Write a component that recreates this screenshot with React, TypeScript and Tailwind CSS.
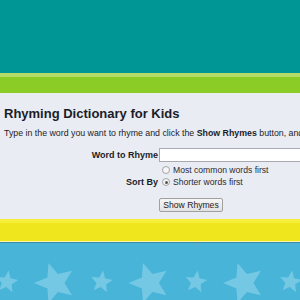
const starPoints = (cx: number, cy: number, R: number, rot: number) => {
  const pts: string[] = [];
  for (let i = 0; i < 10; i++) {
    const r = i % 2 === 0 ? R : R * 0.45;
    const a = ((rot - 90 + i * 36) * Math.PI) / 180;
    pts.push(`${(cx + r * Math.cos(a)).toFixed(1)},${(cy + r * Math.sin(a)).toFixed(1)}`);
  }
  return pts.join(" ");
};

const StarBand = () => {
  const periods = [-1, 0, 1, 2, 3];
  return (
    <svg width="300" height="57" viewBox="0 0 300 57" className="block shrink-0">
      <rect width="300" height="57" fill="#48b4d8" />
      {periods.map((p) => (
        <g key={p}>
          <rect x={7 + p * 94.5} y="0" width="1" height="2" fill="#7a9fb0" />
          <polygon points={starPoints(7 + p * 94.5, 39, 11.5, 8)} fill="#74c8e4" />
          <polygon points={starPoints(55 + p * 94.5, 40, 21, -18)} fill="#74c8e4" />
        </g>
      ))}
    </svg>
  );
};

const Radio = ({ checked }: { checked?: boolean }) => (
  <span className="w-[8px] h-[8px] rounded-full border border-[#a4a4a4] bg-[#f6f6f6] flex items-center justify-center shrink-0">
    {checked && <span className="w-[3px] h-[3px] rounded-full bg-[#555]" />}
  </span>
);

const App = () => {
  return (
    <div className="w-[300px] h-[300px] overflow-hidden flex flex-col bg-[#e9ecf3] font-['Liberation_Sans',Arial,sans-serif] text-[#1c1c28]">
      <div className="h-[73px] bg-[#009696] shrink-0" />
      <div className="h-[4px] bg-[#b2db68] shrink-0" />
      <div className="h-[16px] bg-[#8ccc26] shrink-0" />

      <main className="h-[126px] shrink-0 px-1 pt-[13px] whitespace-nowrap overflow-hidden">
        <h1 className="text-[13px] leading-4 font-bold">Rhyming Dictionary for Kids</h1>
        <p className="mt-[3px] text-[8.8px] leading-4">
          Type in the word you want to rhyme and click the <b>Show Rhymes</b> button, and a list of rhymes will appear.
        </p>

        <div className="mt-[7px] grid grid-cols-[154px_1fr] gap-x-[1px] items-center text-[8.6px] leading-[12px]">
          <label className="text-right font-bold text-[9px]">Word to Rhyme</label>
          <input className="h-[14px] w-[200px] bg-white border border-[#a9a9b3]" />

          <span />
          <label className="flex items-center gap-[3px] ml-[3px] mt-[2px] text-[#2a2a33]">
            <Radio />
            Most common words first
          </label>

          <span className="text-right font-bold text-[9px]">Sort By</span>
          <label className="flex items-center gap-[3px] ml-[3px] text-[#2a2a33]">
            <Radio checked />
            Shorter words first
          </label>

          <span />
          <button className="mt-[10px] w-[64px] h-[14px] text-[8.6px] leading-none bg-gradient-to-b from-[#f6f6f6] to-[#e2e2e2] border border-[#a0a0a0] rounded-[2px] text-[#222]">
            Show Rhymes
          </button>
        </div>
      </main>

      <div className="h-[4px] bg-[#f5ef3c] shrink-0" />
      <div className="h-[18px] bg-[#efe61e] shrink-0" />
      <div className="h-[1px] bg-[#fbf7a8] shrink-0" />
      <div className="h-[1px] bg-[#3a8aa8] shrink-0" />
      <StarBand />
    </div>
  );
};

export default App;
